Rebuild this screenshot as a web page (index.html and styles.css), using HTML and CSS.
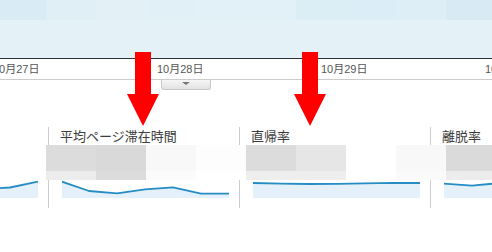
FILE: index.html
```html
<!DOCTYPE html>
<html lang="ja">
<head>
<meta charset="utf-8">
<link rel="stylesheet" href="styles.css">
</head>
<body>
<div class="page">
  <div class="chart">
    <div class="chart-mosaic">
      <span class="t1"></span><span class="t2"></span><span class="t3"></span><span class="t4"></span><span class="t5"></span>
      <span class="t6"></span><span class="t7"></span><span class="t8"></span><span class="t9"></span><span class="t10"></span>
    </div>
  </div>
  <div class="axis">
    <span class="date">10月27日</span>
    <span class="date">10月28日</span>
    <span class="date">10月29日</span>
    <span class="date">10月30日</span>
  </div>
  <div class="handle"><span class="tri"></span></div>

  <div class="metrics">
    <div class="metric">
      <div class="label"></div>
      <div class="value"></div>
      <svg class="spark" width="167" height="20" viewBox="0 0 167 20">
        <polygon class="area" points="0,9 28,9 56,10 83,11 111,10 139,8.5 167,2.7 167,19 0,19"/>
        <polyline class="line" points="0,9 28,9 56,10 83,11 111,10 139,8.5 167,2.7"/>
      </svg>
    </div>
    <div class="metric">
      <div class="label">平均ページ滞在時間</div>
      <div class="value"></div>
      <svg class="spark" width="167" height="20" viewBox="0 0 167 20">
        <polygon class="area" points="0,2.7 27,12 55,14.3 83,10.3 111,8.3 139,14.7 167,14.7 167,19 0,19"/>
        <polyline class="line" points="0,2.7 27,12 55,14.3 83,10.3 111,8.3 139,14.7 167,14.7"/>
      </svg>
    </div>
    <div class="metric">
      <div class="label">直帰率</div>
      <div class="value"></div>
      <svg class="spark" width="167" height="20" viewBox="0 0 167 20">
        <polygon class="area" points="0,4 28,4.6 56,5 84,4.8 112,4.4 140,3.8 167,4 167,19 0,19"/>
        <polyline class="line" points="0,4 28,4.6 56,5 84,4.8 112,4.4 140,3.8 167,4"/>
      </svg>
    </div>
    <div class="metric">
      <div class="label">離脱率</div>
      <div class="value"></div>
      <svg class="spark" width="167" height="20" viewBox="0 0 167 20">
        <polygon class="area" points="0,4.7 28,6.7 56,4 84,5 112,4 140,5 167,4 167,19 0,19"/>
        <polyline class="line" points="0,4.7 28,6.7 56,4 84,5 112,4 140,5 167,4"/>
      </svg>
    </div>
  </div>

  <div class="redact">
    <span class="r a1"></span><span class="r a2"></span><span class="r a3"></span><span class="r a4"></span><span class="r a5"></span>
    <span class="r a6"></span><span class="r a7"></span><span class="r a8"></span><span class="r a9"></span><span class="r a10"></span>
    <span class="r b1"></span><span class="r b2"></span><span class="r b3"></span><span class="r b4"></span><span class="r b5"></span>
    <span class="r b6"></span><span class="r b7"></span><span class="r b8"></span><span class="r b9"></span><span class="r b10"></span>
  </div>

  <svg class="arrows" width="492" height="252" viewBox="0 0 492 252">
    <rect x="135" y="52" width="16" height="43" fill="#ff0000"/>
    <polygon points="127,94 159,94 143,126" fill="#ff0000"/>
    <rect x="302" y="52" width="16" height="43" fill="#ff0000"/>
    <polygon points="294,94 326,94 310,126" fill="#ff0000"/>
  </svg>
</div>
</body>
</html>
```

FILE: styles.css
```css
html, body {
  margin: 0;
  padding: 0;
  background: #ffffff;
}

.page {
  position: relative;
  width: 492px;
  height: 252px;
  overflow: hidden;
  font-family: "Liberation Sans", "Noto Sans CJK JP", sans-serif;
}

.chart {
  height: 58px;
  background: #e4f2f8;
}

.chart-mosaic {
  display: flex;
  margin-left: -4px;
  height: 20px;
}

.chart-mosaic span {
  flex: 0 0 50px;
  height: 20px;
}

.t1 { background: #d9ebf5; }
.t2 { background: #e0eff6; }
.t3 { background: #e3f1f7; }
.t4 { background: #e1f0f6; }
.t5 { background: #e2f1f7; }
.t6 { background: #e2f0f7; }
.t7 { background: #dbeef6; }
.t8 { background: #dbedf6; }
.t9 { background: #ddeef6; }
.t10 { background: #d8eaf4; }

.axis {
  display: flex;
  height: 20px;
  border-top: 1px solid #2e3539;
  border-bottom: 1px solid #cccccc;
  margin-left: -7px;
  white-space: nowrap;
}

.date {
  flex: 0 0 164px;
  font-size: 11px;
  line-height: 20px;
  color: #555555;
}

.handle {
  position: relative;
  width: 48px;
  height: 8px;
  margin-left: 161px;
  border: 1px solid #c9c9c9;
  border-top: none;
  border-radius: 0 0 3px 3px;
  background: linear-gradient(#f6f6f6, #e2e2e2);
  display: flex;
  justify-content: center;
  padding-top: 1px;
  box-sizing: content-box;
}

.tri {
  width: 0;
  height: 0;
  border-left: 4px solid transparent;
  border-right: 4px solid transparent;
  border-top: 3px solid #777777;
  margin-top: 1px;
}

.metrics {
  display: flex;
  margin-left: -143px;
  margin-top: 37px;
}

.metric {
  flex: 0 0 190px;
  height: 81px;
  border-left: 1px solid #cccccc;
}

.label {
  height: 19px;
  padding-left: 11px;
  font-family: "Noto Sans CJK JP", "Liberation Sans", sans-serif;
  font-size: 13px;
  line-height: 17px;
  color: #3c3c3c;
  white-space: nowrap;
}

.value {
  height: 33px;
}

.spark {
  display: block;
  margin-left: 13px;
}

.spark .area {
  fill: #e5f1fa;
}

.spark .line {
  fill: none;
  stroke: #268cc4;
  stroke-width: 1.8;
  stroke-linejoin: round;
}

.redact {
  position: absolute;
  top: 145px;
  left: -4px;
  display: grid;
  grid-template-columns: repeat(10, 50px);
  grid-template-rows: 26px 9px;
}

.a1 { background: transparent; }
.a2 { background: #dcdcdc; }
.a3 { background: #d9d9d9; }
.a4 { background: #f8f8f8; }
.a5 { background: #fdfdfd; }
.a6 { background: #dcdcdc; }
.a7 { background: #e6e6e6; }
.a8 { background: #ffffff; }
.a9 { background: #f8f8f8; }
.a10 { background: #dadada; }

.b1 { background: transparent; }
.b2 { background: #ececec; }
.b3 { background: #dcdcdc; }
.b4 { background: #fbfbfb; }
.b5 { background: #ffffff; }
.b6 { background: #eeeeee; }
.b7 { background: #eeeeee; }
.b8 { background: #ffffff; }
.b9 { background: #fafafa; }
.b10 { background: #ececec; }

.arrows {
  position: absolute;
  top: 0;
  left: 0;
  pointer-events: none;
}
```
